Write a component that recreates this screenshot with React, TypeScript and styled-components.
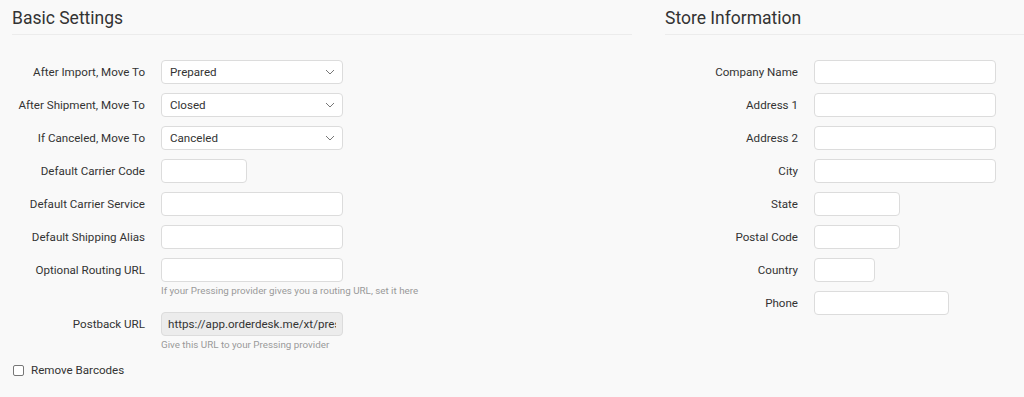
import * as React from 'react';
import styled, { createGlobalStyle } from 'styled-components';

const Global = createGlobalStyle`
  html, body {
    margin: 0;
    padding: 0;
    background: #f9f9f9;
    font-family: Roboto, 'Liberation Sans', Arial, sans-serif;
    color: #333;
  }
`;

const Page = styled.div`
  display: grid;
  grid-template-columns: 620px 1fr;
  column-gap: 33px;
  padding: 0 0 0 12px;
  width: 1024px;
  height: 397px;
  box-sizing: border-box;
  overflow: hidden;
`;

const Column = styled.section`
  display: flex;
  flex-direction: column;
`;

const Heading = styled.h2`
  margin: 0;
  height: 35px;
  box-sizing: border-box;
  padding-top: 7px;
  font-size: 17.5px;
  font-weight: 400;
  line-height: 22px;
  color: #333;
  border-bottom: 1px solid #ececec;
`;

const Form = styled.div`
  display: flex;
  flex-direction: column;
  gap: 9px;
  padding-top: 25px;
`;

const Row = styled.div`
  display: grid;
  grid-template-columns: 133px auto;
  column-gap: 16px;
  align-items: start;
`;

const Label = styled.label`
  text-align: right;
  font-size: 11.6px;
  line-height: 24px;
  color: #333;
  white-space: nowrap;
`;

const Field = styled.div`
  display: flex;
  flex-direction: column;
  margin-bottom: 6px;
`;

const Input = styled.input<{ $w?: number }>`
  width: ${({ $w }) => $w ?? 182}px;
  height: 24px;
  box-sizing: border-box;
  border: 1px solid #dcdcdc;
  border-radius: 4px;
  background: ${({ disabled }) => (disabled ? '#ececec' : '#fff')};
  padding: 0 6px;
  font-family: inherit;
  font-size: 11.6px;
  color: #333;
  outline: none;
`;

const SelectBox = styled.div`
  width: 182px;
  height: 24px;
  box-sizing: border-box;
  border: 1px solid #dcdcdc;
  border-radius: 4px;
  background: #fff;
  display: flex;
  align-items: center;
  justify-content: space-between;
  padding: 0 7px 0 8px;
  font-size: 11.6px;
  color: #333;
`;

const Help = styled.div`
  font-size: 9.8px;
  color: #999;
  margin-top: 3px;
  line-height: 12px;
  white-space: nowrap;
`;

const CheckRow = styled.label`
  display: flex;
  align-items: center;
  gap: 7px;
  font-size: 11.6px;
  color: #333;
  margin-top: 6px;
`;

const Box = styled.span`
  width: 9px;
  height: 9px;
  border: 1px solid #777;
  border-radius: 2px;
  background: #fff;
  margin-left: 1px;
`;

function Chevron() {
  return (
    <svg width='10' height='6' viewBox='0 0 10 6' fill='none'>
      <path d='M1 1l4 4 4-4' stroke='#777' strokeWidth='1' />
    </svg>
  );
}

function Select({ value }: { value: string }) {
  return (
    <SelectBox>
      <span>{value}</span>
      <Chevron />
    </SelectBox>
  );
}

export default function App() {
  return (
    <>
      <Global />
      <Page>
        <Column>
          <Heading>Basic Settings</Heading>
          <Form>
            <Row>
              <Label>After Import, Move To</Label>
              <Select value='Prepared' />
            </Row>
            <Row>
              <Label>After Shipment, Move To</Label>
              <Select value='Closed' />
            </Row>
            <Row>
              <Label>If Canceled, Move To</Label>
              <Select value='Canceled' />
            </Row>
            <Row>
              <Label>Default Carrier Code</Label>
              <Input $w={86} />
            </Row>
            <Row>
              <Label>Default Carrier Service</Label>
              <Input />
            </Row>
            <Row>
              <Label>Default Shipping Alias</Label>
              <Input />
            </Row>
            <Row>
              <Label>Optional Routing URL</Label>
              <Field>
                <Input />
                <Help>If your Pressing provider gives you a routing URL, set it here</Help>
              </Field>
            </Row>
            <Row>
              <Label>Postback URL</Label>
              <Field>
                <Input disabled defaultValue='https://app.orderdesk.me/xt/pressing/postback' />
                <Help>Give this URL to your Pressing provider</Help>
              </Field>
            </Row>
          </Form>
          <CheckRow>
            <Box />
            Remove Barcodes
          </CheckRow>
        </Column>
        <Column>
          <Heading>Store Information</Heading>
          <Form>
            <Row>
              <Label>Company Name</Label>
              <Input />
            </Row>
            <Row>
              <Label>Address 1</Label>
              <Input />
            </Row>
            <Row>
              <Label>Address 2</Label>
              <Input />
            </Row>
            <Row>
              <Label>City</Label>
              <Input />
            </Row>
            <Row>
              <Label>State</Label>
              <Input $w={86} />
            </Row>
            <Row>
              <Label>Postal Code</Label>
              <Input $w={86} />
            </Row>
            <Row>
              <Label>Country</Label>
              <Input $w={61} />
            </Row>
            <Row>
              <Label>Phone</Label>
              <Input $w={135} />
            </Row>
          </Form>
        </Column>
      </Page>
    </>
  );
}
